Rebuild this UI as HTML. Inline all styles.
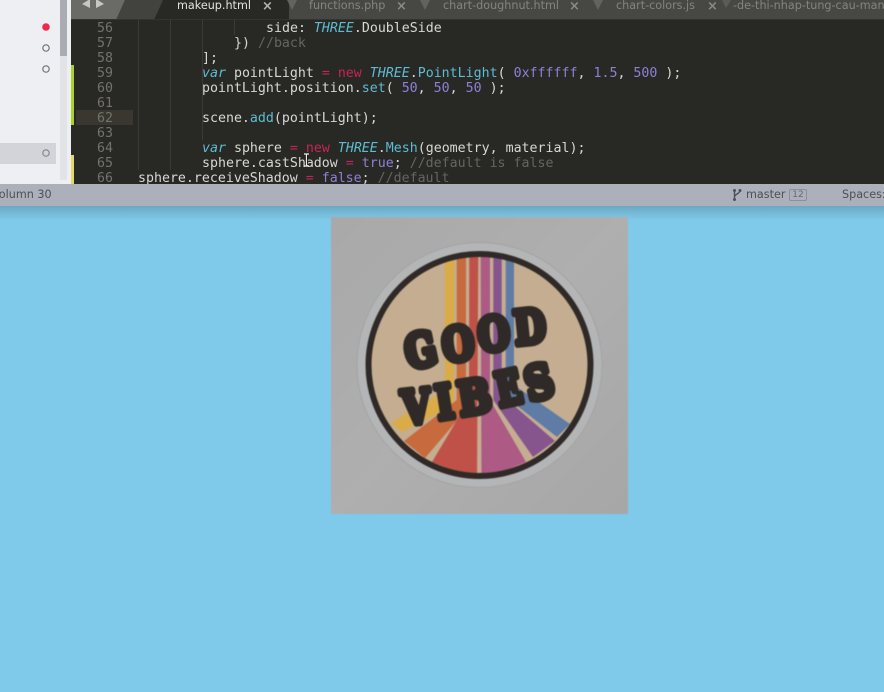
<!DOCTYPE html>
<html>
<head>
<meta charset="utf-8">
<style>
html,body{margin:0;padding:0;width:884px;height:692px;overflow:hidden;background:#7fc9ea;}
#root{position:relative;width:884px;height:692px;overflow:hidden;font-family:"DejaVu Sans",sans-serif;}
.a{position:absolute;}
.code{position:absolute;left:0;font:13.27px/15px "DejaVu Sans Mono",monospace;white-space:pre;color:#d8d8d0;height:15px;}
.n{position:absolute;left:97px;font:13.27px/15px "DejaVu Sans Mono",monospace;color:#73736b;height:15px;}
.k{color:#c4265a}
.i{color:#5dbcd2;font-style:italic}
.f{color:#5dbcd2}
.p{color:#8f80d6}
.c{color:#66665e}
.t{position:absolute;top:-2px;font-size:11.2px;line-height:15px;color:#85857f;white-space:pre;}
.x{position:absolute;top:0;font-size:13px;line-height:13px;color:#8a8a84;font-weight:bold;}
.g{position:absolute;top:20px;width:1px;height:150px;background:#3a3a36;}
</style>
</head>
<body>
<div id="root">
<!-- sidebar -->
<div class="a" style="left:0;top:0;width:71px;height:184px;background:#eeeff2;"></div>
<div class="a" style="left:60px;top:0;width:7px;height:180px;background:#e2e3e7;"></div>
<div class="a" style="left:60px;top:0;width:7px;height:56px;background:#a9acb3;"></div>
<div class="a" style="left:0;top:143px;width:56px;height:21px;background:#d3d4d9;"></div>
<svg class="a" style="left:0;top:0" width="71" height="184">
<circle cx="46" cy="27" r="3.8" fill="#ee2a4c"/>
<circle cx="46" cy="48" r="3.2" fill="none" stroke="#707276" stroke-width="1.2"/>
<circle cx="46" cy="69" r="3.2" fill="none" stroke="#707276" stroke-width="1.2"/>
<circle cx="46" cy="153" r="3.2" fill="none" stroke="#85878c" stroke-width="1.2"/>
</svg>
<!-- editor -->
<div class="a" style="left:71px;top:0;width:813px;height:184px;background:#282825;overflow:hidden;"></div>
<!-- tab bar -->
<svg class="a" style="left:71px;top:0" width="813" height="20">
<rect width="813" height="20" fill="#474743"/>
<polygon points="0,0 54,0 45,20 0,20" fill="#6a6a66"/>
<polygon points="54,0 92,0 83,20 45,20" fill="#42423e"/>
<polygon points="92,0 218,0 218,20 83,20" fill="#282825"/>
<polygon points="11,4 19,-1 19,8" fill="#c6c6c2"/>
<polygon points="33,4 25,-1 25,8" fill="#c6c6c2"/>
<polygon points="216,0 226,0 221,10" fill="#63635e"/>
<polygon points="349,0 359,0 354,10" fill="#63635e"/>
<polygon points="522,0 532,0 527,10" fill="#63635e"/>
<polygon points="651,0 660,0 655,8" fill="#5c5c57"/>
<rect y="19" width="813" height="1" fill="#333330"/>
</svg>
<div class="t" style="left:177px;color:#e2e2e0;">makeup.html</div>
<div class="x" style="left:262px;color:#b5b5b0;">×</div>
<div class="t" style="left:309px;">functions.php</div>
<div class="x" style="left:396px;">×</div>
<div class="t" style="left:443px;">chart-doughnut.html</div>
<div class="x" style="left:569px;">×</div>
<div class="t" style="left:616px;">chart-colors.js</div>
<div class="x" style="left:707px;">×</div>
<div class="t" style="left:733px;">-de-thi-nhap-tung-cau-man-</div>
<!-- gutter -->
<div class="a" style="left:71px;top:65px;width:3px;height:60px;background:#a6d42d;"></div>
<div class="a" style="left:71px;top:155px;width:3px;height:29px;background:#e2d86c;"></div>
<div class="a" style="left:76px;top:110px;width:57px;height:15px;background:#39372f;"></div>
<div class="g" style="left:138px;"></div>
<div class="g" style="left:170px;"></div>
<div class="g" style="left:202px;height:120px;"></div>
<div class="g" style="left:234px;height:15px;"></div>
<div class="n" style="top:21px;">56</div>
<div class="n" style="top:36px;">57</div>
<div class="n" style="top:51px;">58</div>
<div class="n" style="top:66px;">59</div>
<div class="n" style="top:81px;">60</div>
<div class="n" style="top:96px;">61</div>
<div class="n" style="top:111px;">62</div>
<div class="n" style="top:126px;">63</div>
<div class="n" style="top:141px;">64</div>
<div class="n" style="top:156px;">65</div>
<div class="n" style="top:171px;height:13px;overflow:hidden;">66</div>
<!-- code -->
<div class="code" style="left:266px;top:21px;">side: <span class="i">THREE</span>.DoubleSide</div>
<div class="code" style="left:234px;top:36px;">}) <span class="c">//back</span></div>
<div class="code" style="left:202px;top:51px;">];</div>
<div class="code" style="left:202px;top:66px;"><span class="i">var</span> pointLight <span class="k">=</span> <span class="k">new</span> <span class="i">THREE</span>.<span class="f">PointLight</span>( <span class="p">0xffffff</span>, <span class="p">1.5</span>, <span class="p">500</span> );</div>
<div class="code" style="left:202px;top:81px;">pointLight.position.<span class="f">set</span>( <span class="p">50</span>, <span class="p">50</span>, <span class="p">50</span> );</div>
<div class="code" style="left:202px;top:111px;">scene.<span class="f">add</span>(pointLight);</div>
<div class="code" style="left:202px;top:141px;"><span class="i">var</span> sphere <span class="k">=</span> <span class="k">new</span> <span class="i">THREE</span>.<span class="f">Mesh</span>(geometry, material);</div>
<div class="code" style="left:202px;top:156px;">sphere.castShadow <span class="k">=</span> <span class="p">true</span>; <span class="c">//default is false</span></div>
<div class="code" style="left:138px;top:171px;height:13px;overflow:hidden;">sphere.receiveShadow <span class="k">=</span> <span class="p">false</span>; <span class="c">//default</span></div>
<!-- I-beam cursor -->
<svg class="a" style="left:302px;top:153px" width="10" height="15">
<path d="M2 1H7M4.5 1V13M2 13H7" stroke="#eeeeee" stroke-width="1.2" fill="none"/>
<path d="M5.5 2V12" stroke="#111" stroke-width="0.8"/>
</svg>
<!-- status bar -->
<div class="a" style="left:0;top:184px;width:884px;height:22px;background:#abb0ba;"></div>
<div class="a" style="left:-9px;top:187px;font-size:11.2px;line-height:15px;color:#4d5057;white-space:pre;">Column 30</div>
<svg class="a" style="left:731px;top:188px" width="12" height="14">
<path d="M3.5 2V12M9 2.5C9 6 3.5 6 3.5 9" stroke="#4d5057" stroke-width="1.4" fill="none"/>
<circle cx="3.5" cy="2.5" r="1.5" fill="#4d5057"/>
<circle cx="9" cy="2.5" r="1.5" fill="#4d5057"/>
<circle cx="3.5" cy="11.5" r="1.5" fill="#4d5057"/>
</svg>
<div class="a" style="left:746px;top:187px;font-size:11.2px;line-height:15px;color:#4d5057;">master</div>
<div class="a" style="left:789px;top:189px;width:16px;height:10px;border:1px solid #8b8f97;border-radius:2px;font-size:9px;line-height:10px;text-align:center;color:#666971;">12</div>
<div class="a" style="left:842px;top:187px;font-size:11.2px;line-height:15px;color:#4d5057;white-space:pre;">Spaces:</div>
<!-- page -->
<div class="a" style="left:0;top:206px;width:884px;height:486px;background:#7fc9ea;"></div>
<div class="a" style="left:0;top:206px;width:884px;height:14px;background:linear-gradient(#6aa9c3,#7fc9ea);"></div>
<!-- sticker -->
<svg class="a" style="left:331px;top:217px;filter:blur(0.4px);" width="297" height="297" viewBox="331 217 297 297">
<defs>
<linearGradient id="bg" x1="0" y1="0" x2="1" y2="1">
<stop offset="0" stop-color="#a9a9a9"/>
<stop offset="0.5" stop-color="#afafaf"/>
<stop offset="1" stop-color="#a7a7a7"/>
</linearGradient>
<clipPath id="in"><circle cx="479.5" cy="365" r="109"/></clipPath>
</defs>
<rect x="331" y="217" width="297" height="297" fill="url(#bg)"/>
<circle cx="479.5" cy="365" r="122.5" fill="#b4b5b6" stroke="#a3a3a3" stroke-width="1"/>
<circle cx="479.5" cy="365" r="111" fill="#c4ad90"/>
<g clip-path="url(#in)">
<polygon points="445,250 454,250 454,405 402,432 391,423 445,390" fill="#d9ac47"/>
<polygon points="456.7,250 466,250 466,410 425,458 404,441 456.7,400" fill="#c76a3d"/>
<polygon points="469.3,250 478.3,250 477,480 432,462 469,400" fill="#bf5148"/>
<polygon points="480.7,250 490,250 490,400 526,462 481.5,480" fill="#ad5a85"/>
<polygon points="493.3,250 501.7,250 501.7,395 555,441 533,457 493.3,400" fill="#87558e"/>
<polygon points="505.7,250 514,250 514,385 570,424 557,437 505.7,397" fill="#5f7ca6"/>
</g>
<circle cx="479.5" cy="365" r="111" fill="none" stroke="#2f2a27" stroke-width="6"/>
<g font-family="'DejaVu Serif',serif" font-weight="bold" font-size="46" fill="#2f2a27" stroke="#2f2a27" stroke-width="7" stroke-linejoin="round" text-anchor="middle">
<text transform="translate(424 366) rotate(-12) scale(.8 1)">G</text>
<text transform="translate(460 360) rotate(-7) scale(.8 1)">O</text>
<text transform="translate(495.5 350) rotate(-6) scale(.8 1)">O</text>
<text transform="translate(531.5 343) rotate(-6) scale(.8 1)">D</text>
<text transform="translate(418 423) rotate(-6) scale(.8 1)">V</text>
<text transform="translate(447 418) rotate(-9) scale(.8 1)">I</text>
<text transform="translate(477 413) rotate(-9) scale(.85 1)">B</text>
<text transform="translate(512 404) rotate(-12) scale(.72 1)">E</text>
<text transform="translate(543 398) rotate(-14) scale(.85 1)">S</text>
</g>
</svg>
</div>
</body>
</html>
